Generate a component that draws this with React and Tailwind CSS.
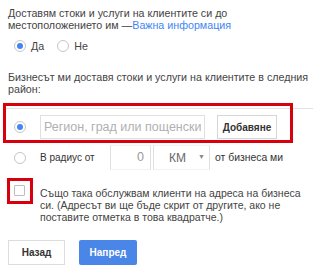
import React from "react";

// Small radio circle
function Radio({ checked }) {
  return (
    <span className="flex h-[12px] w-[12px] shrink-0 items-center justify-center rounded-full border border-[#c6c6c6] bg-white">
      {checked && <span className="h-[6px] w-[6px] rounded-full bg-[#4285f4]" />}
    </span>
  );
}

export default function App() {
  return (
    <div
      className="h-[272px] w-[320px] overflow-hidden bg-white text-[#444]"
      style={{ fontFamily: '"Liberation Sans", Arial, sans-serif' }}
    >
      {/* Intro question */}
      <p className="whitespace-nowrap px-2 pt-[7px] text-[10.7px] leading-[12px]">
        Доставям стоки и услуги на клиентите си до
        <br />
        местоположението им —<span className="text-[#4285f4]">Важна информация</span>
      </p>

      {/* Yes / No */}
      <div className="mt-[7px] flex items-center pl-[14px] text-[10.7px]">
        <Radio checked />
        <span className="ml-[5px]">Да</span>
        <span className="ml-[13px]">
          <Radio />
        </span>
        <span className="ml-[5px]">Не</span>
      </div>

      {/* Service area */}
      <p className="mt-[17px] whitespace-nowrap px-2 text-[10.7px] leading-[12px]">
        Бизнесът ми доставя стоки и услуги на клиентите в следния
        <br />
        район:
      </p>

      <div className="relative mt-[13px]">
        <div className="ml-[6px] mr-[7px] h-px bg-[#e3e3e3]" />
        <div className="flex items-center pb-[4px] pt-[6px]">
          <span className="ml-[14px]">
            <Radio checked />
          </span>
          <div className="ml-[14px] flex h-[24px] w-[165px] items-center overflow-hidden whitespace-nowrap border border-[#e0e0e0] pl-[3px] text-[12.5px] text-[#b0b0b0]">
            Регион, град или пощенски
          </div>
          <button className="ml-[12px] h-[24px] w-[60px] border border-[#d6d6d6] bg-white text-[10px] font-bold text-[#333]">
            Добавяне
          </button>
        </div>
        {/* red annotation */}
        <div className="pointer-events-none absolute left-[3px] top-[-5px] h-[40px] w-[290px] border-[3px] border-[#d9000d]" />
      </div>

      {/* Radius */}
      <div className="mt-[2px] flex h-[25px] items-center">
        <span className="ml-[14px]">
          <Radio />
        </span>
        <span className="ml-[14px] w-[70px] text-[10px] text-[#333]">В радиус от</span>
        <div className="flex h-full w-[41px] items-center justify-end border-x border-y border-x-[#e0e0e0] border-y-[#f3f3f3] pr-[6px] text-[12.5px] text-[#999]">
          0
        </div>
        <div className="ml-[2px] flex h-full w-[57px] items-center border-x border-y border-x-[#e0e0e0] border-y-[#f3f3f3] pl-[15px] text-[12px] text-[#666]">
          КМ
          <span className="ml-auto mr-[4px] text-[7px] text-[#888]">▼</span>
        </div>
        <span className="ml-[5px] text-[10.4px] text-[#333]">от бизнеса ми</span>
      </div>

      {/* Also serve at address */}
      <div className="mt-[8px] flex">
        <div className="relative ml-[7px] h-[26px] w-[26px] shrink-0">
          <span className="absolute left-[7px] top-[7px] h-[11px] w-[11px] rounded-[1px] border border-[#bdbdbd]" />
          <span className="pointer-events-none absolute inset-0 border-[3px] border-[#d9000d]" />
        </div>
        <p className="ml-[7px] mt-[9px] whitespace-nowrap text-[10.5px] leading-[12px]">
          Също така обслужвам клиенти на адреса на бизнеса
          <br />
          си. (Адресът ви ще бъде скрит от другите, ако не
          <br />
          поставите отметка в това квадратче.)
        </p>
      </div>

      {/* Buttons */}
      <div className="mt-[17px] flex px-2">
        <button className="h-[25px] w-[57px] border border-[#dcdcdc] bg-white text-[10px] font-bold text-[#333]">
          Назад
        </button>
        <button className="ml-[14px] h-[25px] w-[58px] rounded-[2px] bg-[#4a86e8] text-[10px] font-bold text-white">
          Напред
        </button>
      </div>
    </div>
  );
}
